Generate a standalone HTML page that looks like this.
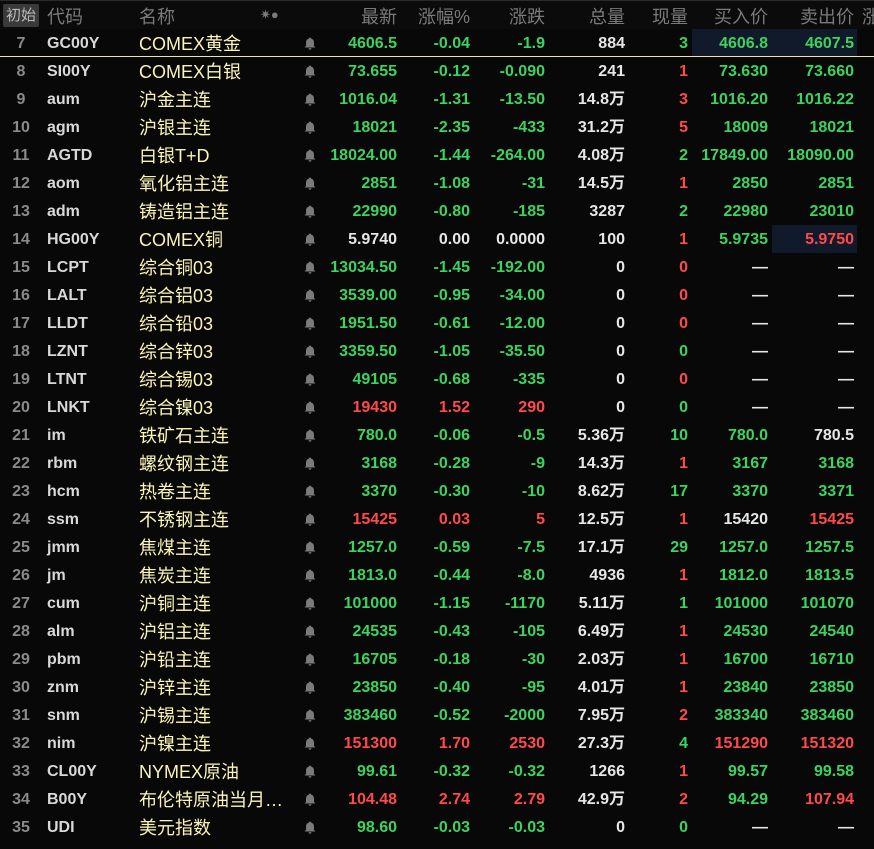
<!DOCTYPE html><html><head><meta charset="utf-8"><style>
body{margin:0;width:874px;height:849px;background:#080808;overflow:hidden;font-family:"Liberation Sans","Noto Sans CJK SC",sans-serif;position:relative}
.h{position:absolute;top:0;left:0;width:874px;height:29px;background:#0b0b0b;border-top:1px solid #2a2a2a;box-sizing:border-box}
.h span{position:absolute;top:2px;font-size:18px;color:#7a7a7a;white-space:nowrap}
.btn{position:absolute;left:3px;top:3px;width:36px;height:23px;background:#3a3a3a;border-radius:2px;color:#bbb;font-size:15px;line-height:23px;text-align:center}
.r{position:absolute;left:0;width:874px;height:28px}
.r div{position:absolute;top:1px;line-height:28px;font-size:16px;font-weight:bold;white-space:nowrap}
.i{left:0;width:42px;text-align:center;color:#8a8a8a}
.c{left:47px;color:#d8d8d8}
.n{left:139px;font-weight:normal!important;font-size:18px!important;color:#fbf5b5}
.b{left:304px;top:8px!important;line-height:0!important}
.R{text-align:right}
.g{color:#3cd35e}.x{color:#ff4a4a}.w{color:#e6e6e6}
.hl{position:absolute;background:#111a2b;height:28px}
</style></head><body>
<div class="h"><div class="btn">初始</div>
<span style="left:47px">代码</span><span style="left:139px">名称</span><span style="left:260px;font-size:13px;top:6px">✷●</span>
<span style="right:477px">最新</span><span style="right:404px">涨幅%</span><span style="right:329px">涨跌</span><span style="right:249px">总量</span><span style="right:186px">现量</span><span style="right:106px">买入价</span><span style="right:20px">卖出价</span><span style="left:862px">涨</span></div>
<div class="hl" style="left:692px;top:29px;width:80px"></div><div class="hl" style="left:772px;top:29px;width:85px"></div>
<div class="hl" style="left:772px;top:225px;width:85px"></div>
<div style="position:absolute;left:0;top:56px;width:874px;height:1px;background:#e8e6a0"></div>
<div id="t"></div>
<script>
var d=[["7","GC00Y","COMEX黄金","g4606.5","g-0.04","g-1.9","w884","g3","g4606.8","g4607.5"],
["8","SI00Y","COMEX白银","g73.655","g-0.12","g-0.090","w241","x1","g73.630","g73.660"],
["9","aum","沪金主连","g1016.04","g-1.31","g-13.50","w14.8万","x3","g1016.20","g1016.22"],
["10","agm","沪银主连","g18021","g-2.35","g-433","w31.2万","x5","g18009","g18021"],
["11","AGTD","白银T+D","g18024.00","g-1.44","g-264.00","w4.08万","g2","g17849.00","g18090.00"],
["12","aom","氧化铝主连","g2851","g-1.08","g-31","w14.5万","x1","g2850","g2851"],
["13","adm","铸造铝主连","g22990","g-0.80","g-185","w3287","g2","g22980","g23010"],
["14","HG00Y","COMEX铜","w5.9740","w0.00","w0.0000","w100","x1","g5.9735","x5.9750"],
["15","LCPT","综合铜03","g13034.50","g-1.45","g-192.00","w0","x0","w—","w—"],
["16","LALT","综合铝03","g3539.00","g-0.95","g-34.00","w0","x0","w—","w—"],
["17","LLDT","综合铅03","g1951.50","g-0.61","g-12.00","w0","x0","w—","w—"],
["18","LZNT","综合锌03","g3359.50","g-1.05","g-35.50","w0","g0","w—","w—"],
["19","LTNT","综合锡03","g49105","g-0.68","g-335","w0","x0","w—","w—"],
["20","LNKT","综合镍03","x19430","x1.52","x290","w0","g0","w—","w—"],
["21","im","铁矿石主连","g780.0","g-0.06","g-0.5","w5.36万","g10","g780.0","w780.5"],
["22","rbm","螺纹钢主连","g3168","g-0.28","g-9","w14.3万","x1","g3167","g3168"],
["23","hcm","热卷主连","g3370","g-0.30","g-10","w8.62万","g17","g3370","g3371"],
["24","ssm","不锈钢主连","x15425","x0.03","x5","w12.5万","x1","w15420","x15425"],
["25","jmm","焦煤主连","g1257.0","g-0.59","g-7.5","w17.1万","g29","g1257.0","g1257.5"],
["26","jm","焦炭主连","g1813.0","g-0.44","g-8.0","w4936","x1","g1812.0","g1813.5"],
["27","cum","沪铜主连","g101000","g-1.15","g-1170","w5.11万","g1","g101000","g101070"],
["28","alm","沪铝主连","g24535","g-0.43","g-105","w6.49万","x1","g24530","g24540"],
["29","pbm","沪铅主连","g16705","g-0.18","g-30","w2.03万","x1","g16700","g16710"],
["30","znm","沪锌主连","g23850","g-0.40","g-95","w4.01万","x1","g23840","g23850"],
["31","snm","沪锡主连","g383460","g-0.52","g-2000","w7.95万","x2","g383340","g383460"],
["32","nim","沪镍主连","x151300","x1.70","x2530","w27.3万","g4","x151290","x151320"],
["33","CL00Y","NYMEX原油","g99.61","g-0.32","g-0.32","w1266","x1","g99.57","g99.58"],
["34","B00Y","布伦特原油当月…","x104.48","x2.74","x2.79","w42.9万","x2","g94.29","x107.94"],
["35","UDI","美元指数","g98.60","g-0.03","g-0.03","w0","g0","w—","w—"]];
var rt=[397,470,545,625,688,768,854],h="";
var bell='<svg width="12" height="13" viewBox="0 0 12 13"><path d="M6 0.5C6.6 0.5 7 1 7 1.5C9 2 10 3.6 10 6V9L11.5 10.5H0.5L2 9V6C2 3.6 3 2 5 1.5C5 1 5.4 0.5 6 0.5Z M4.5 11.3H7.5C7.5 12.2 6.8 12.8 6 12.8C5.2 12.8 4.5 12.2 4.5 11.3Z" fill="#7a7a7a"/></svg>';
d.forEach(function(r,k){h+='<div class="r" style="top:'+(29+28*k)+'px"><div class="i">'+r[0]+'</div><div class="c">'+r[1]+'</div><div class="n">'+r[2]+'</div><div class="b">'+bell+'</div>';
for(var j=3;j<10;j++){var v=r[j];h+='<div class="R '+v[0]+'" style="right:'+(874-rt[j-3])+'px">'+v.slice(1)+'</div>';}h+='</div>';});
document.getElementById("t").innerHTML=h;
</script></body></html>
